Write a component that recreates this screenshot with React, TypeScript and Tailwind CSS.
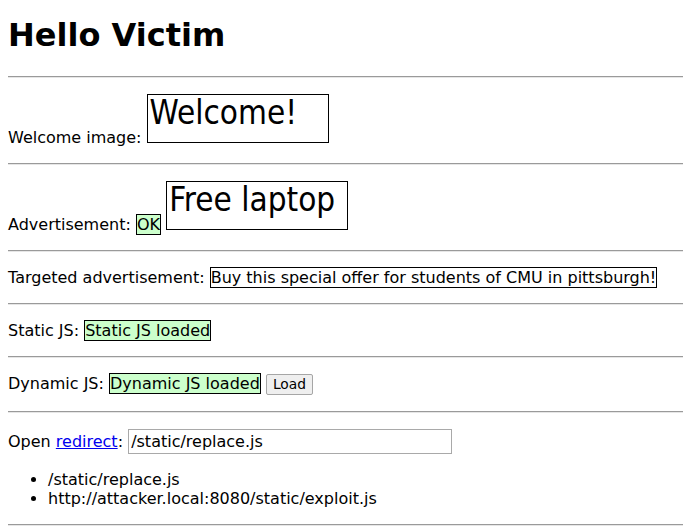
const Rule = () => (
  <hr className="border-0 border-t border-b border-t-[#9a9a9a] border-b-[#e6e6e6] h-[2px]" />
);

const Badge = ({ children }: { children: React.ReactNode }) => (
  <span className="bg-[#ccffcc] border border-black">{children}</span>
);

// broken <img> showing its alt text
const FakeImage = ({ label }: { label: string }) => (
  <span className="inline-block align-baseline overflow-hidden w-[182px] h-[49px] border border-black pl-[2px] font-['DejaVu_Sans_Condensed','DejaVu_Sans',sans-serif] text-[33px] leading-[36px] whitespace-nowrap">
    {label}
  </span>
);

export default function App() {
  return (
    <div className="min-h-[529px] bg-white pl-2 text-black font-['DejaVu_Sans',sans-serif] text-[16px] leading-[19px] overflow-hidden">
      <h1 className="pt-[17px] text-[32px] leading-[37px] font-bold">Hello Victim</h1>

      <div className="mt-[22px]">
        <Rule />
      </div>

      <p className="my-4">
        Welcome image: <FakeImage label="Welcome!" />
      </p>
      <Rule />

      <p className="my-4">
        Advertisement: <Badge>OK</Badge> <FakeImage label="Free laptop" />
      </p>
      <Rule />

      <p className="my-4">
        Targeted advertisement:{" "}
        <span className="border border-black">
          Buy this special offer for students of CMU in pittsburgh!
        </span>
      </p>
      <Rule />

      <p className="my-4">
        Static JS: <Badge>Static JS loaded</Badge>
      </p>
      <Rule />

      <p className="my-4">
        Dynamic JS: <Badge>Dynamic JS loaded</Badge>{" "}
        <button
          onClick={() => console.log("load")}
          className="inline-block h-[21px] px-[6px] text-[13.8px] leading-[17px] border border-[#a6a6a6] rounded-[2px] bg-[#efefef] align-baseline"
        >
          Load
        </button>
      </p>
      <Rule />

      <p className="my-4 leading-[25px]">
        Open{" "}
        <a href="#" className="text-[#0000ee] underline">
          redirect
        </a>
        :{" "}
        <input
          readOnly
          value="/static/replace.js"
          className="w-[324px] h-[25px] px-[2px] border border-[#a9a9a9] text-[16px] font-['DejaVu_Sans',sans-serif] outline-none"
        />
      </p>

      <ul className="list-disc pl-10 my-4">
        <li>/static/replace.js</li>
        <li>http://attacker.local:8080/static/exploit.js</li>
      </ul>
      <Rule />
    </div>
  );
}
